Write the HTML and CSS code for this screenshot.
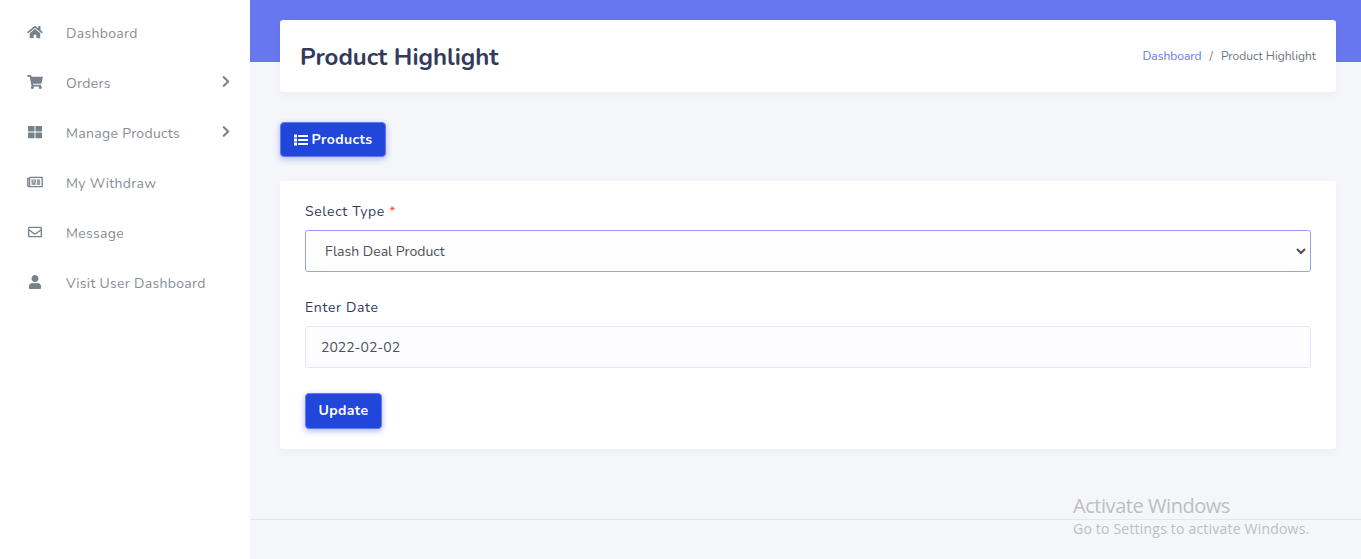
FILE: index.html
```
<!DOCTYPE html>
<html lang="en">
<head>
<meta charset="utf-8">
<title>Product Highlight</title>
<link rel="stylesheet" href="styles.css">
</head>
<body>
<div class="layout">
  <nav class="sidebar">
    <a class="item"><svg class="ico" viewBox="0 0 576 512"><path d="M280.4 148.3L96 300.1V464a16 16 0 0 0 16 16l112.1-.3a16 16 0 0 0 15.9-16V368a16 16 0 0 1 16-16h64a16 16 0 0 1 16 16v95.6a16 16 0 0 0 16 16.1L464 480a16 16 0 0 0 16-16V300L295.7 148.3a12.2 12.2 0 0 0-15.3 0zM571.6 251.500L488 182.600V44a12 12 0 0 0-12-12h-56a12 12 0 0 0-12 12v72.600L318.500 43a48 48 0 0 0-61 0L4.300 251.500a12 12 0 0 0-1.600 16.900l25.500 31a12 12 0 0 0 16.900 1.600L280.400 107.200a12.200 12.200 0 0 1 15.300 0L531 301a12 12 0 0 0 16.900-1.600l25.500-31a12 12 0 0 0-1.800-16.900z"/></svg><span class="t">Dashboard</span></a>
    <a class="item"><svg class="ico" viewBox="0 0 576 512"><path d="M528.1 301.300l47.300-208C578.800 78.300 567.400 64 552 64H159.200l-9.200-44.800C147.800 8 137.900 0 126.500 0H24C10.700 0 0 10.700 0 24v16c0 13.300 10.700 24 24 24h69.900l70.200 343.400C147.300 417.100 136 435.200 136 456c0 30.900 25.100 56 56 56s56-25.100 56-56c0-15.700-6.400-29.800-16.800-40h209.600C430.400 426.200 424 440.300 424 456c0 30.900 25.100 56 56 56s56-25.100 56-56c0-22.200-12.900-41.300-31.600-50.400l5.500-24.300c3.400-15-8-29.300-23.400-29.300H218.100l-6.500-32h293.100c11.200 0 20.900-7.800 23.400-18.700z"/></svg><span class="t">Orders</span><svg class="chev" viewBox="0 0 320 512"><path d="M285.500 273L91.100 467.300c-9.400 9.400-24.600 9.400-33.900 0l-22.700-22.700c-9.400-9.400-9.400-24.500 0-33.900L188.500 256 34.500 101.300c-9.300-9.400-9.300-24.500 0-33.900l22.700-22.700c9.400-9.400 24.600-9.400 33.900 0L285.500 239c9.400 9.400 9.400 24.600 0 34z"/></svg></a>
    <a class="item"><svg class="ico" viewBox="0 0 512 512"><path d="M296 32h192c13.300 0 24 10.700 24 24v160c0 13.300-10.700 24-24 24H296c-13.300 0-24-10.700-24-24V56c0-13.300 10.700-24 24-24zm-80 0H24C10.700 32 0 42.700 0 56v160c0 13.300 10.700 24 24 24h192c13.300 0 24-10.700 24-24V56c0-13.300-10.700-24-24-24zM0 296v160c0 13.300 10.700 24 24 24h192c13.300 0 24-10.700 24-24V296c0-13.300-10.700-24-24-24H24c-13.300 0-24 10.700-24 24zm296 184h192c13.300 0 24-10.700 24-24V296c0-13.300-10.700-24-24-24H296c-13.300 0-24 10.700-24 24v160c0 13.300 10.700 24 24 24z"/></svg><span class="t">Manage Products</span><svg class="chev" viewBox="0 0 320 512"><path d="M285.500 273L91.100 467.300c-9.400 9.400-24.600 9.400-33.900 0l-22.700-22.700c-9.400-9.400-9.400-24.500 0-33.900L188.500 256 34.500 101.300c-9.300-9.400-9.300-24.500 0-33.900l22.700-22.700c9.400-9.400 24.600-9.400 33.900 0L285.500 239c9.400 9.400 9.400 24.600 0 34z"/></svg></a>
    <a class="item"><svg class="ico" viewBox="0 0 576 512"><path d="M552 64H112c-20.900 0-38.600 13.400-45.200 32H24c-13.300 0-24 10.700-24 24v272c0 30.900 25.100 56 56 56h496c13.300 0 24-10.700 24-24V88c0-13.300-10.700-24-24-24zM48 392V144h16v248c0 4.400-3.600 8-8 8s-8-3.600-8-8zm480 8H111.400c.4-2.600.6-5.300.6-8V112h416v288zM172 280h136c6.600 0 12-5.400 12-12v-96c0-6.600-5.400-12-12-12H172c-6.600 0-12 5.400-12 12v96c0 6.600 5.400 12 12 12zm28-80h80v40h-80v-40zm-40 140v-24c0-6.600 5.400-12 12-12h136c6.600 0 12 5.400 12 12v24c0 6.600-5.400 12-12 12H172c-6.600 0-12-5.400-12-12zm192 0v-24c0-6.600 5.400-12 12-12h104c6.600 0 12 5.400 12 12v24c0 6.600-5.400 12-12 12H364c-6.600 0-12-5.400-12-12zm0-144v-24c0-6.600 5.400-12 12-12h104c6.600 0 12 5.400 12 12v24c0 6.600-5.400 12-12 12H364c-6.600 0-12-5.400-12-12zm0 72v-24c0-6.600 5.400-12 12-12h104c6.600 0 12 5.400 12 12v24c0 6.600-5.400 12-12 12H364c-6.600 0-12-5.400-12-12z"/></svg><span class="t">My Withdraw</span></a>
    <a class="item"><svg class="ico" viewBox="0 0 512 512"><path d="M464 64H48C21.500 64 0 85.500 0 112v288c0 26.500 21.500 48 48 48h416c26.500 0 48-21.500 48-48V112c0-26.500-21.500-48-48-48zm0 48v40.800c-22.400 18.300-58.200 46.700-134.600 106.500-16.800 13.200-50.200 45.100-73.400 44.700-23.200.4-56.600-31.500-73.400-44.700C106.200 199.500 70.400 171.100 48 152.800V112h416zM48 400V214.400c22.900 18.300 55.400 43.900 104.900 82.600 21.900 17.200 60.100 55.200 103.100 55 42.700.2 80.500-37.200 103.100-54.900 49.500-38.800 82-64.400 104.900-82.700V400H48z"/></svg><span class="t">Message</span></a>
    <a class="item"><svg class="ico" viewBox="0 0 448 512"><path d="M224 256c70.700 0 128-57.300 128-128S294.700 0 224 0 96 57.300 96 128s57.300 128 128 128zm89.600 32h-16.700c-22.200 10.200-46.900 16-72.900 16s-50.600-5.800-72.900-16h-16.700C60.200 288 0 348.200 0 422.400V464c0 26.500 21.500 48 48 48h352c26.500 0 48-21.500 48-48v-41.600c0-74.200-60.200-134.400-134.400-134.400z"/></svg><span class="t">Visit User Dashboard</span></a>
  </nav>
  <main class="main">
    <header class="card head">
      <h1 class="title">Product Highlight</h1>
      <div class="crumbs"><a class="link">Dashboard</a><span class="slash">/</span><span class="here">Product Highlight</span></div>
    </header>
    <button class="btn products"><svg class="list" viewBox="0 0 14 14"><path d="M0 1.500h3v3H0zM0 5.500h3v3H0zM0 9.500h3v3H0zM4.200 2H14v2H4.200zM4.200 6H14v2H4.200zM4.200 10H14v2H4.200z"/></svg><span>Products</span></button>
    <form class="card form">
      <label class="label">Select Type <span class="req">*</span></label>
      <div class="field select"><span>Flash Deal Product</span><svg class="caret" viewBox="0 0 10 7"><path d="M1 1l4 4 4-4"/></svg></div>
      <label class="label">Enter Date</label>
      <div class="field"><span>2022-02-02</span></div>
      <button class="btn update" type="button"><span>Update</span></button>
    </form>
    <footer class="footer"></footer>
  </main>
</div>
<div class="watermark"><div class="wm1">Activate Windows</div><div class="wm2">Go to Settings to activate Windows.</div></div>
</body>
</html>
```
FILE: styles.css
```
* { box-sizing: border-box; }
body { margin: 0; height: 559px; overflow: hidden; font-family: Nunito, Lato, sans-serif; font-size: 14px; color: #6c757d; }
.layout { display: flex; height: 559px; }
.sidebar { width: 250px; background: #fff; padding-top: 8px; flex: none; }
.item { display: flex; align-items: center; height: 50px; padding: 0 20px 0 27px; color: #868e96; }
.ico { width: 16px; height: 14px; fill: #78828b; margin: 0 23px 2px 0; flex: none; }
.chev { width: 8px; height: 13px; fill: #78828b; margin: 0 0 3px auto; }
.t { white-space: nowrap; letter-spacing: .3px; }
.main { flex: 1; background: linear-gradient(#6777ef 62px, #f4f6f9 62px); padding: 20px 25px 0 30px; display: flex; flex-direction: column; align-items: stretch; }
.card { background: #fff; border-radius: 3px; box-shadow: 0 4px 8px rgba(0, 0, 0, .03); }
.head { height: 72px; flex: none; display: flex; align-items: center; justify-content: space-between; padding: 2px 20px 0; }
.title { margin: 0; font-size: 24px; font-weight: 700; color: #34395e; white-space: nowrap; }
.crumbs { display: flex; font-size: 12px; white-space: nowrap; margin-bottom: 2px; }
.link { color: #6777ef; }
.slash { width: 19.400px; text-align: center; }
.btn { display: flex; align-items: center; justify-content: center; gap: 4px; padding: 0; border: 1px solid #6777ef; border-radius: 4px; background: #2046da; color: #fff; font: 700 14px Nunito, Lato, sans-serif; letter-spacing: .4px; box-shadow: 0 2px 6px #acb5f6; flex: none; }
.products { width: 106px; height: 35px; margin: 30px 0 24px; }
.list { width: 14px; height: 14px; fill: #fff; }
.form { height: 268px; flex: none; padding: 22px 25px 20px; }
.label { display: block; height: 18px; line-height: 18px; margin-bottom: 9px; color: #34395e; font-weight: 450; letter-spacing: .65px; }
.req { color: #fc544b; }
.field { display: flex; align-items: center; height: 42px; border-radius: 3px; border: 1px solid #e4e6fc; background: #fdfdff; color: #495057; padding: 0 15px; }
.select { border-color: #95a0f4; background: #fefeff; padding: 0 4px 0 19px; justify-content: space-between; margin-bottom: 27px; }
.caret { width: 10px; height: 7px; fill: none; stroke: #495057; stroke-width: 2; }
.update { width: 77px; height: 36px; margin-top: 25px; padding-bottom: 2px; }
.footer { margin: 70px -25px 0 -30px; border-top: 1px solid #e3e6ec; }
.watermark { position: absolute; left: 1073px; top: 493px; font-family: "Segoe UI", "Open Sans", sans-serif; color: #bcbec1; white-space: nowrap; }
.wm1 { font-size: 20px; line-height: 26px; letter-spacing: -.45px; }
.wm2 { font-size: 14px; line-height: 20px; letter-spacing: .2px; }
```
